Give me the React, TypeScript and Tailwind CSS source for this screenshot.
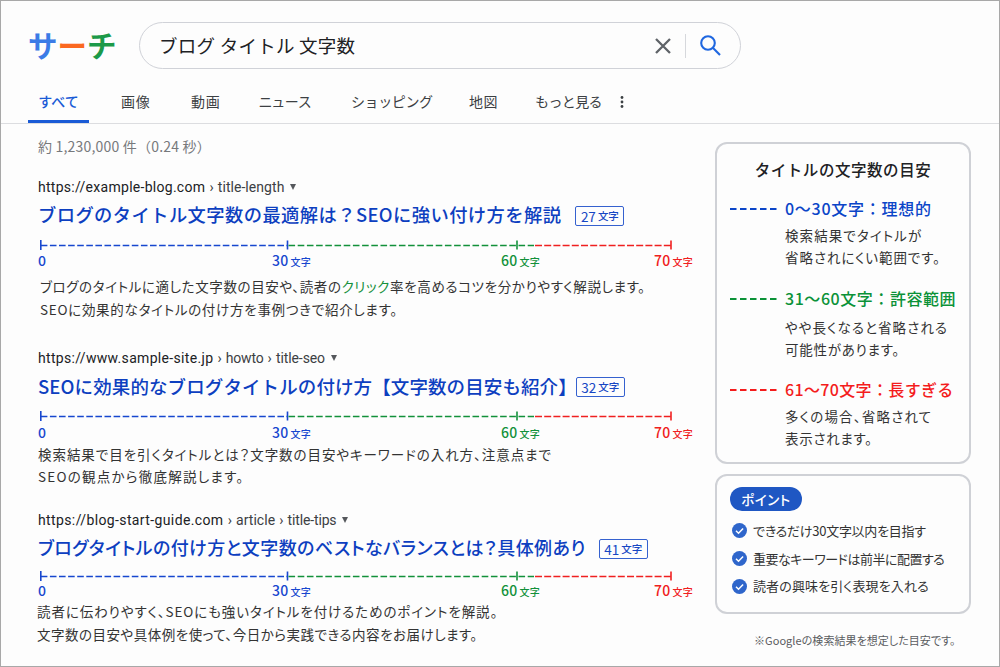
import type { ReactNode } from 'react';
import clsx from 'clsx';

const TABS = [
  { label: '画像', className: 'tracking-[0.8px]' },
  { label: '動画', className: 'tracking-[0.8px]' },
  { label: 'ニュース', className: "tracking-[0.5px] [font-feature-settings:'palt']" },
  { label: 'ショッピング', className: 'tracking-[-0.4px]' },
  { label: '地図', className: 'tracking-[0.6px]' },
  { label: 'もっと見る', className: 'tracking-[-0.6px] -ml-px' },
];

type Result = {
  id: number;
  className: string;
  host: string;
  hostClass: string;
  crumbs: { text: string; className: string }[];
  title: string;
  titleClass: string;
  count: number;
  badgeClass: string;
  rulerClass: string;
  labelsClass: string;
  bodyClass: string;
  body: { content: ReactNode; className: string }[];
};

const RESULTS: Result[] = [
  {
    id: 1,
    className: 'mt-[18px]',
    host: 'https://example-blog.com',
    hostClass: 'tracking-[0.28px]',
    crumbs: [{ text: 'title-length', className: 'tracking-[0.05px]' }],
    title: 'ブログのタイトル文字数の最適解は？SEOに強い付け方を解説',
    titleClass: 'mt-[2px] text-[18.3px] tracking-[0.42px]',
    count: 27,
    badgeClass: 'ml-[14px]',
    rulerClass: 'mt-[11px]',
    labelsClass: 'mt-0',
    bodyClass: 'mt-[6px] pl-[2px] leading-[22.5px]',
    body: [
      {
        content: (
          <>
            ブログのタイトルに適した文字数の目安や、読者の<span className="text-[#16903c]">クリック</span>
            率を高めるコツを分かりやすく解説します。
          </>
        ),
        className: 'tracking-[0.62px]',
      },
      { content: 'SEOに効果的なタイトルの付け方を事例つきで紹介します。', className: 'tracking-[0.72px]' },
    ],
  },
  {
    id: 2,
    className: 'mt-[27px]',
    host: 'https://www.sample-site.jp',
    hostClass: 'tracking-[0.32px]',
    crumbs: [
      { text: 'howto', className: 'tracking-[-0.2px]' },
      { text: 'title-seo', className: 'tracking-[-0.1px]' },
    ],
    title: 'SEOに効果的なブログタイトルの付け方【文字数の目安も紹介】',
    titleClass: 'mt-[3px] text-[18.5px] tracking-[0.1px]',
    count: 32,
    badgeClass: '-ml-px',
    rulerClass: 'mt-[10px]',
    labelsClass: 'mt-px',
    bodyClass: 'mt-[2px] leading-[22px]',
    body: [
      { content: '検索結果で目を引くタイトルとは？文字数の目安やキーワードの入れ方、注意点まで', className: 'tracking-[0.95px]' },
      { content: 'SEOの観点から徹底解説します。', className: 'tracking-[1.25px]' },
    ],
  },
  {
    id: 3,
    className: 'mt-[22px]',
    host: 'https://blog-start-guide.com',
    hostClass: 'tracking-[0.38px]',
    crumbs: [
      { text: 'article', className: 'tracking-[0.03px]' },
      { text: 'title-tips', className: 'tracking-[-0.15px]' },
    ],
    title: 'ブログタイトルの付け方と文字数のベストなバランスとは？具体例あり',
    titleClass: "mt-[2px] text-[18px] tracking-[0.43px] [font-feature-settings:'palt']",
    count: 41,
    badgeClass: 'ml-[13px]',
    rulerClass: 'mt-[9px]',
    labelsClass: '-mt-px',
    bodyClass: 'mt-px -ml-px leading-[22.5px]',
    body: [
      { content: '読者に伝わりやすく、SEOにも強いタイトルを付けるためのポイントを解説。', className: 'tracking-[0.92px]' },
      { content: '文字数の目安や具体例を使って、今日から実践できる内容をお届けします。', className: 'tracking-[0.5px]' },
    ],
  },
];

const GUIDES = [
  {
    range: '0〜30文字：理想的',
    rangeClass: 'tracking-[0.75px]',
    color: 'text-[#0b45c8]',
    className: 'mt-[15px]',
    linesClass: 'mt-[4px]',
    lines: [
      { text: '検索結果でタイトルが', className: 'tracking-[1.08px]' },
      { text: '省略されにくい範囲です。', className: 'tracking-[0.95px]' },
    ],
  },
  {
    range: '31〜60文字：許容範囲',
    rangeClass: 'tracking-[0.55px]',
    color: 'text-[#0b9238]',
    className: 'mt-[18px]',
    linesClass: 'mt-[6px]',
    lines: [
      { text: 'やや長くなると省略される', className: 'tracking-[1.09px]' },
      { text: '可能性があります。', className: 'tracking-[0.75px]' },
    ],
  },
  {
    range: '61〜70文字：長すぎる',
    rangeClass: 'tracking-[0.35px]',
    color: 'text-[#f41c1c]',
    className: 'mt-[17px]',
    linesClass: 'mt-[4px]',
    lines: [
      { text: '多くの場合、省略されて', className: 'tracking-[1.2px]' },
      { text: '表示されます。', className: 'tracking-[0.72px]' },
    ],
  },
];

const POINTS = [
  { text: 'できるだけ30文字以内を目指す', className: 'tracking-[-0.27px]' },
  { text: '重要なキーワードは前半に配置する', className: 'tracking-[-0.5px]' },
  { text: '読者の興味を引く表現を入れる', className: 'tracking-[0.12px]' },
];

function Ruler({ className }: { className?: string }) {
  return (
    <svg className={clsx('block h-3 w-[640px]', className)} viewBox="0 0 640 12" fill="none" strokeWidth="1.6">
      <g stroke="#1747cf">
        <path d="M2.8 1v10M249.5 1.5v9" />
        <path d="M2.8 6.5H249" strokeDasharray="6.6 2.5" />
      </g>
      <g stroke="#12913a">
        <path d="M479 1.5v9" />
        <path d="M250.5 6.5H496" strokeDasharray="6.6 2.6" />
      </g>
      <g stroke="#f02020">
        <path d="M633 1.5v9" />
        <path d="M497 6.5H633" strokeDasharray="7 2.2" />
      </g>
    </svg>
  );
}

function RulerLabels({ className }: { className?: string }) {
  return (
    <div className={clsx('flex h-[18px] items-center text-[14px] font-medium', className)}>
      <span className="w-[234px] shrink-0 text-[#1747cf]">0</span>
      <span className="w-[229px] shrink-0 tracking-[0.3px] text-[#1747cf]">
        30<span className="ml-[2px] text-[10px]">文字</span>
      </span>
      <span className="w-[153px] shrink-0 tracking-[0.3px] text-[#12913a]">
        60<span className="ml-[2px] text-[10px]">文字</span>
      </span>
      <span className="shrink-0 tracking-[0.3px] text-[#f02020]">
        70<span className="ml-[2px] text-[10px]">文字</span>
      </span>
    </div>
  );
}

function ResultItem({ result }: { result: Result }) {
  return (
    <article className={clsx('whitespace-nowrap', result.className)}>
      <div className="flex h-[22px] items-center font-['Roboto'] text-[14px] text-[#3c4043]">
        <span className={clsx('text-[#202124]', result.hostClass)}>{result.host}</span>
        {result.crumbs.map((crumb) => (
          <span key={crumb.text} className="flex">
            <span className="w-[12.5px] text-center">›</span>
            <span className={crumb.className}>{crumb.text}</span>
          </span>
        ))}
        <svg className="ml-[6px] h-[6px] w-[6px]" viewBox="0 0 6 6" fill="#55585c">
          <path d="M0 0h6L3 6z" />
        </svg>
      </div>
      <div className="flex items-center">
        <h3 className={clsx('h-7 leading-7 font-medium text-[#0d3fc0]', result.titleClass)}>{result.title}</h3>
        <span
          className={clsx(
            'mt-[5px] flex h-[20px] w-[49px] items-center justify-center rounded-[2px] border border-[#3561cf] text-[13.5px] leading-[18px] text-[#1747c4]',
            result.badgeClass,
          )}
        >
          {result.count}
          <span className="ml-[2px] text-[10.5px] font-medium">文字</span>
        </span>
      </div>
      <Ruler className={result.rulerClass} />
      <RulerLabels className={result.labelsClass} />
      <div className={clsx("text-[13.5px] text-[#333] [font-feature-settings:'palt']", result.bodyClass)}>
        {result.body.map((line, i) => (
          <p key={i} className={line.className}>
            {line.content}
          </p>
        ))}
      </div>
    </article>
  );
}

function CheckIcon() {
  return (
    <svg className="size-[15px]" viewBox="0 0 15 15" fill="none">
      <circle cx="7.5" cy="7.5" r="7.5" fill="#2f66cb" />
      <path d="M4 7.8l2.5 2.4 4.6-4.7" stroke="#fff" strokeWidth="1.5" />
    </svg>
  );
}

export default function App() {
  return (
    <div className="flex h-[667px] w-[1000px] flex-col overflow-hidden border border-[#a8a8a8] bg-[#fdfdfd] font-['Noto_Sans_CJK_JP',sans-serif] text-[#333]">
      {/* Search bar */}
      <header className="border-b border-[#dcdde0]">
        <div className="flex items-center pt-[21px] pl-[27px]">
          <div className="flex w-[111px] pb-[3px] text-[29.5px] leading-[43px] font-bold">
            <span className="text-[#3b7be6]">サ</span>
            <span className="text-[#fb6820]">ー</span>
            <span className="text-[#1c9a49]">チ</span>
          </div>
          <div className="flex h-[47px] w-[602px] items-center rounded-full border-[1.5px] border-[#d0d2d8] pl-[19px]">
            <span className="flex-1 pb-[2px] text-[18.5px] leading-[26px] tracking-[0.25px] text-[#202124]">ブログ タイトル 文字数</span>
            <svg className="size-4" viewBox="0 0 16 16" fill="none" stroke="#5f6368" strokeWidth="2.3">
              <path d="M1 1l14 14M15 1L1 15" />
            </svg>
            <span className="ml-[14px] h-6 w-px bg-[#d6d8dc]" />
            <svg className="mr-[19px] ml-[14px] size-[21px]" viewBox="0 0 21 21" fill="none" stroke="#1f67e0" strokeWidth="2.1">
              <circle cx="8" cy="8" r="6.8" />
              <path d="M12.8 12.8L20 20" />
            </svg>
          </div>
        </div>
        <nav className="mt-[11px] grid h-[43px] grid-cols-[93px_70px_68px_92px_118px_67px_84px_auto] pl-[27px] text-[14px] leading-[43px] whitespace-nowrap text-[#3c4043]">
          <span className="h-[43px] w-[61px] border-b-[3px] border-[#1a5bd6] text-center font-medium text-[#1a5bd6]">すべて</span>
          {TABS.map((tab) => (
            <span key={tab.label} className={tab.className}>
              {tab.label}
            </span>
          ))}
          <svg className="mt-[16px] h-3 w-[4px]" viewBox="0 0 4 12" fill="#3c4043">
            <circle cx="2" cy="1.5" r="1.4" />
            <circle cx="2" cy="6" r="1.4" />
            <circle cx="2" cy="10.5" r="1.4" />
          </svg>
        </nav>
      </header>

      <div className="flex">
        {/* Results */}
        <main className="w-[714px] shrink-0 pt-[10px] pl-[37px]">
          <p className="h-[24px] text-[14px] leading-[24px] tracking-[0.2px] text-[#77797c]">約 1,230,000 件（0.24 秒）</p>
          {RESULTS.map((result) => (
            <ResultItem key={result.id} result={result} />
          ))}
        </main>

        {/* Guide */}
        <aside className="w-[256px] shrink-0 pt-[18px] whitespace-nowrap">
          <section className="h-[322px] rounded-[12px] border-2 border-[#cfd1d6] pt-[13px]">
            <h2 className="text-center text-[15.5px] leading-6 font-medium tracking-[0.55px] text-[#202124]">タイトルの文字数の目安</h2>
            {GUIDES.map((guide) => (
              <div key={guide.range} className={clsx('flex pl-[13px]', guide.className)}>
                <svg className={clsx('mt-[12px] h-[2px] w-[55px] shrink-0', guide.color)} viewBox="0 0 55 2">
                  <path d="M0 1H46.5" stroke="currentColor" strokeWidth="2" strokeDasharray="6.5 3.5" />
                </svg>
                <div>
                  <h3 className={clsx('text-[16px] leading-6 font-medium', guide.color, guide.rangeClass)}>{guide.range}</h3>
                  <div className={clsx("text-[13.5px] leading-[22px] [font-feature-settings:'palt']", guide.linesClass)}>
                    {guide.lines.map((line) => (
                      <p key={line.text} className={line.className}>
                        {line.text}
                      </p>
                    ))}
                  </div>
                </div>
              </div>
            ))}
          </section>

          {/* Points */}
          <section className="mt-[10px] h-[140px] rounded-[12px] border-2 border-[#cfd1d6] pt-[11px] pl-[13px] [font-feature-settings:'palt']">
            <span className="flex h-6 w-[72px] items-center justify-center rounded-full bg-[#1f57c3] text-[13.5px] font-medium tracking-[0.5px] text-white">
              ポイント
            </span>
            <ul className="mt-[6px] pl-[2px] text-[13px]">
              {POINTS.map((point) => (
                <li key={point.text} className="flex h-[27.7px] items-center gap-[6px]">
                  <CheckIcon />
                  <span className={point.className}>{point.text}</span>
                </li>
              ))}
            </ul>
          </section>
          <p className="mt-[16px] pl-[39px] text-[11px] leading-5 tracking-[0.05px] text-[#5a5c60] [font-feature-settings:'palt']">
            ※Googleの検索結果を想定した目安です。
          </p>
        </aside>
      </div>
    </div>
  );
}
